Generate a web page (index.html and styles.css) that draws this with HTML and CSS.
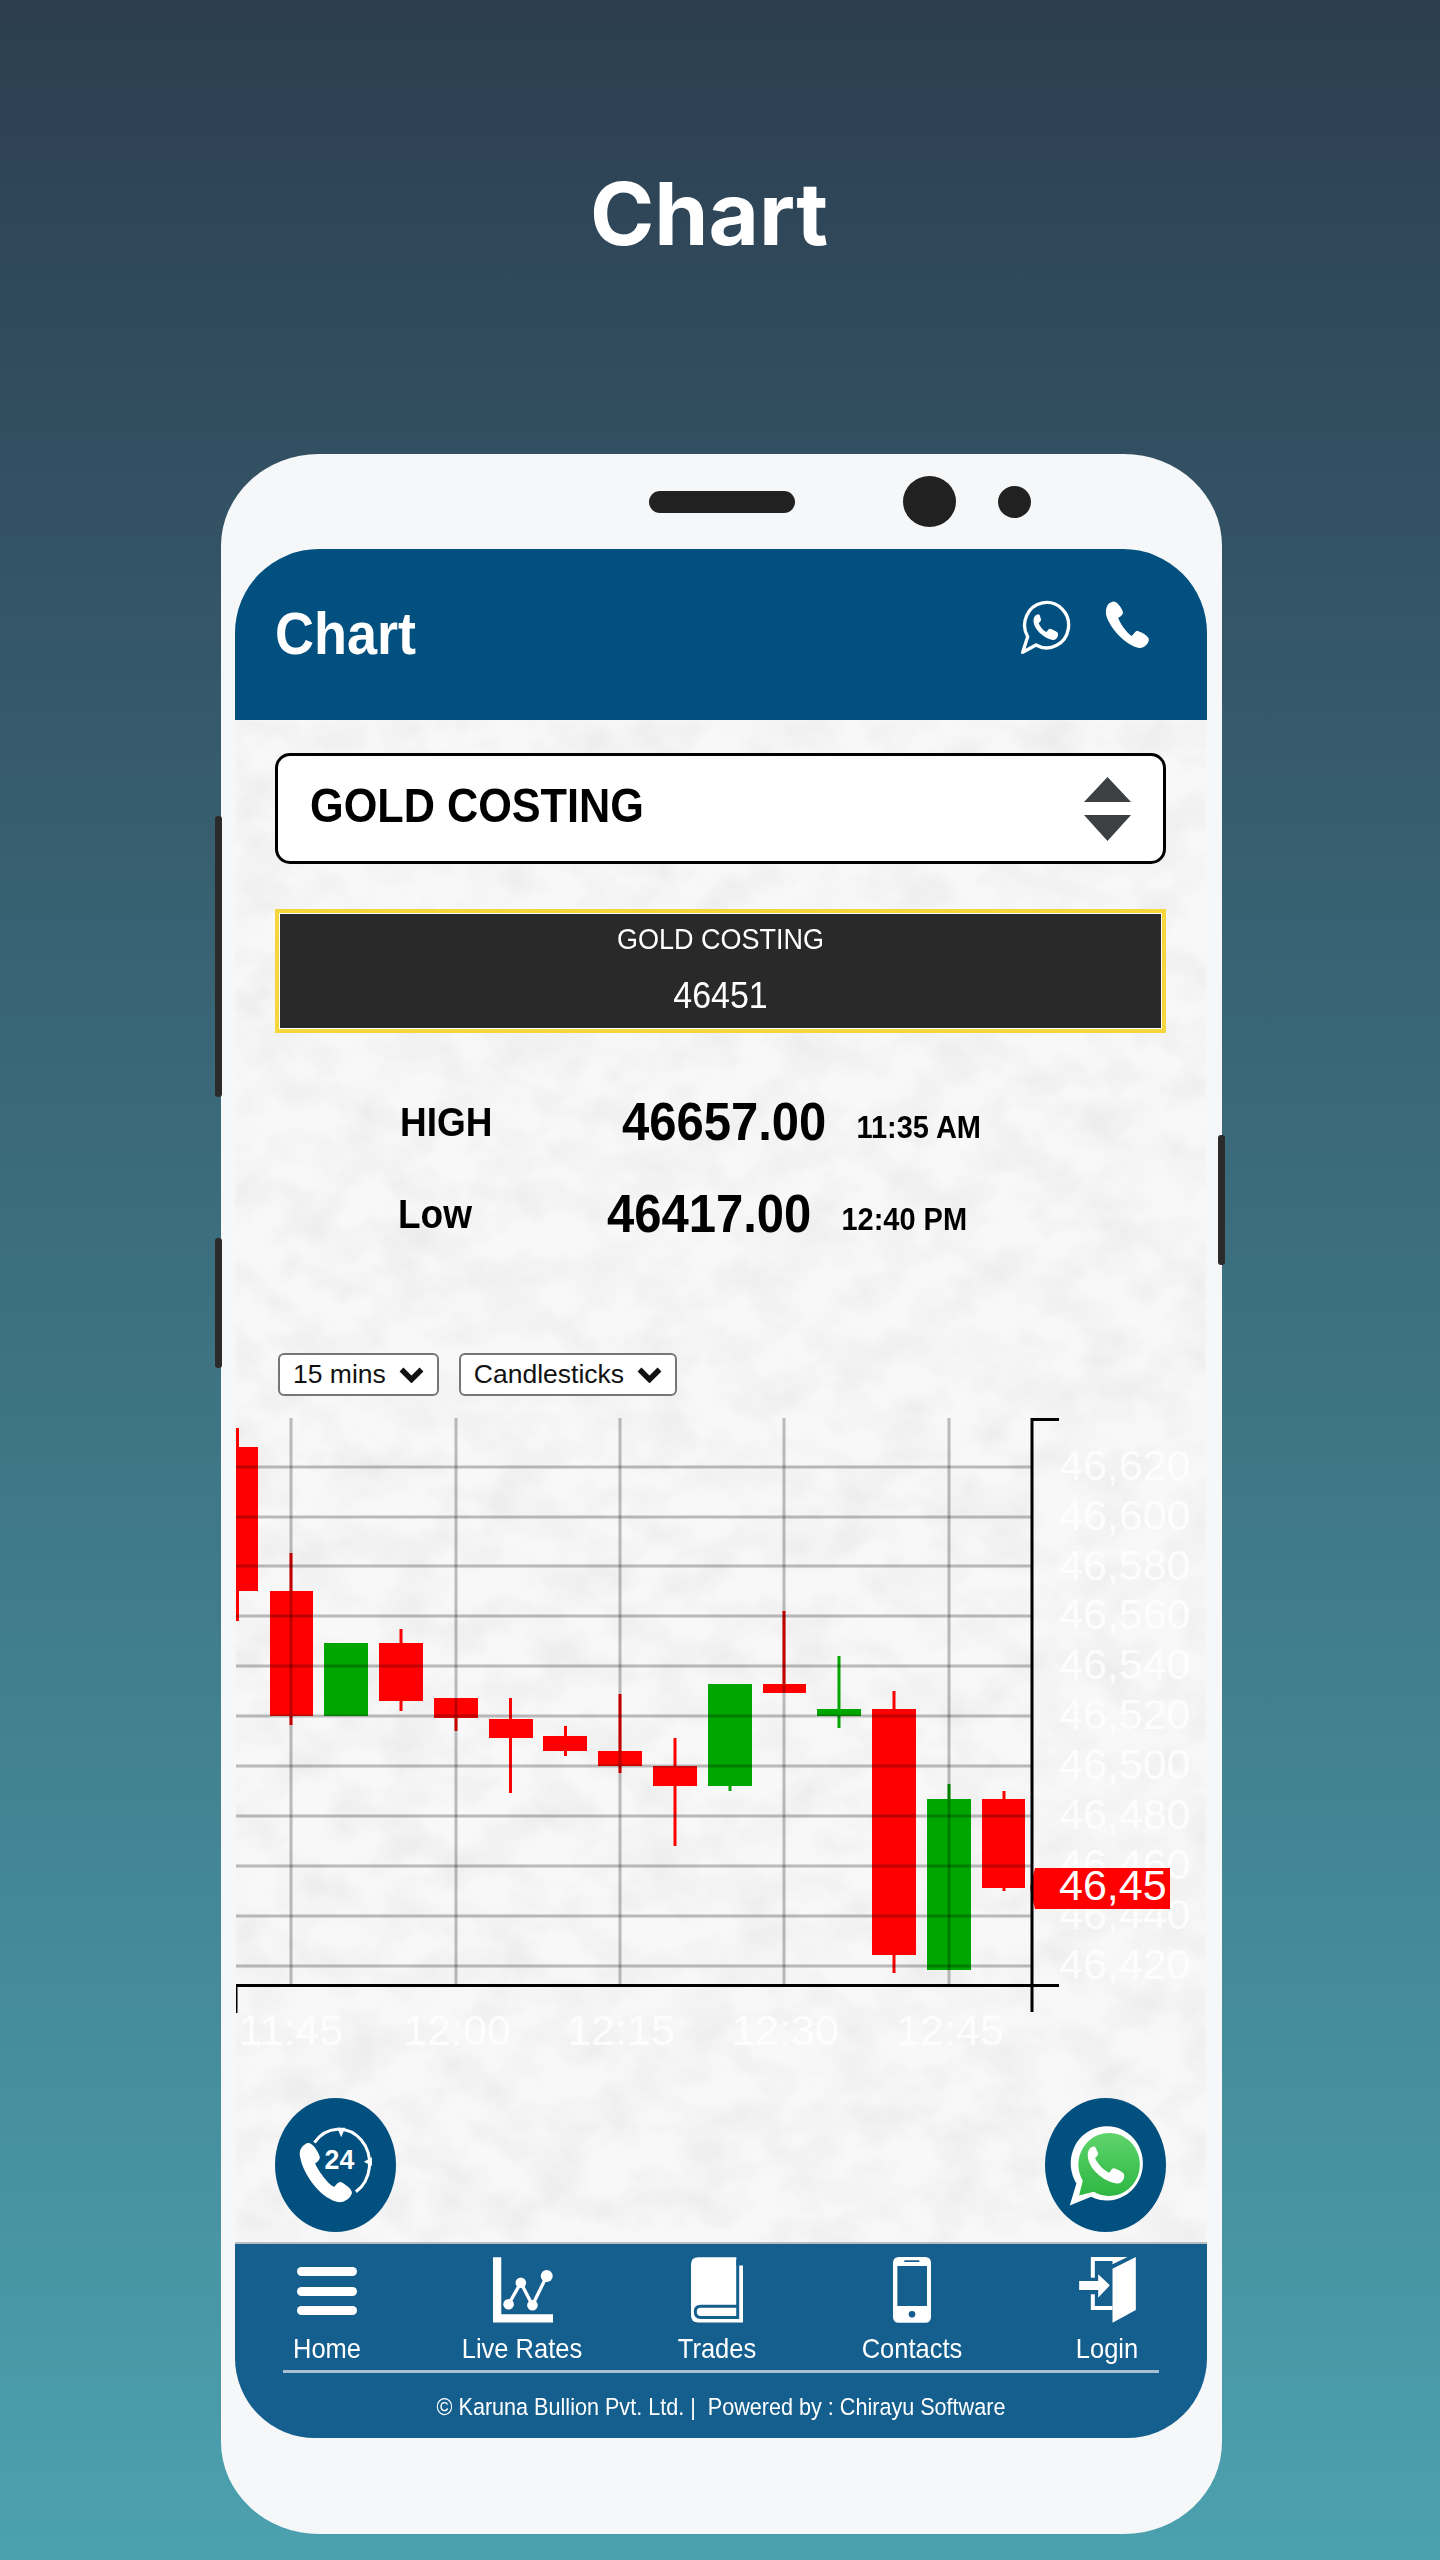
FILE: index.html
```html
<!DOCTYPE html>
<html lang="en">
<head>
<meta charset="utf-8">
<title>Chart</title>
<link rel="stylesheet" href="styles.css">
</head>
<body>
<div class="page">
  <h1 class="page-title">Chart</h1>
  <div class="phone">
    <span class="side-btn side-left-a"></span>
    <span class="side-btn side-left-b"></span>
    <span class="side-btn side-right"></span>
    <div class="notch">
      <span class="speaker"></span>
      <span class="camera"></span>
      <span class="sensor"></span>
    </div>
    <div class="screen">
      <header class="app-header">
        <span class="app-title tall">Chart</span>
        <div class="header-icons">
          <svg class="ic-wa" viewBox="60 55 150 162"><path d="M65 212 L80 165 A66 68 0 1 1 105 190 Z" fill="none" stroke="#fff" stroke-width="10" stroke-linejoin="round"/><path d="M112 98 C98 100 95 115 100 130 C108 152 135 172 155 175 C168 176 174 160 170 153 C164 147 152 142 147 141 C143 140 140 147 136 151 C125 146 118 136 113 125 C116 120 122 118 120 113 C118 107 117 98 112 98 Z" fill="#fff"/></svg>
          <svg class="ic-call" viewBox="310 55 140 150"><path d="M335 60 C320 64 313 78 316 100 C325 135 370 190 415 199 C430 200 445 185 444 172 C440 160 420 150 408 147 C402 150 398 158 392 163 C375 150 358 125 352 108 C360 104 368 98 366 90 C362 78 348 57 335 60 Z" fill="#fff"/></svg>
        </div>
      </header>
      <main class="app-body">
        <svg class="marble" aria-hidden="true" width="971" height="1522">
          <filter id="marble-noise" x="0" y="0" width="100%" height="100%">
            <feTurbulence type="fractalNoise" baseFrequency="0.02 0.026" numOctaves="5" seed="7"/>
            <feColorMatrix type="matrix" values="0 0 0 0 0.55  0 0 0 0 0.55  0 0 0 0 0.55  0.42 0 0 0 -0.15"/>
            <feGaussianBlur stdDeviation="1.5"/>
          </filter>
          <rect width="971" height="1522" fill="#f8f8f8"/>
          <rect width="971" height="1522" filter="url(#marble-noise)"/>
        </svg>
        <div class="select-box">
          <span class="select-text">GOLD COSTING</span>
          <svg class="select-arrows" viewBox="0 0 47 64"><path d="M23.5 0 L47 25 H0 Z M0 38 H47 L23.5 64 Z" fill="#3c4043"/></svg>
        </div>
        <div class="quote-box">
          <span class="quote-name tall">GOLD COSTING</span>
          <span class="quote-price tall">46451</span>
        </div>
        <div class="stats">
          <div class="stat-row stat-high">
            <span class="stat-label tall">HIGH</span>
            <span class="stat-value tall">46657.00</span>
            <span class="stat-time tall">11:35 AM</span>
          </div>
          <div class="stat-row stat-low">
            <span class="stat-label tall">Low</span>
            <span class="stat-value tall">46417.00</span>
            <span class="stat-time tall">12:40 PM</span>
          </div>
        </div>
        <div class="chart-controls">
          <div class="mini-select">15 mins<svg class="chevron" viewBox="0 0 25 16"><path d="M2.5 2.5 L12.5 12.5 L22.5 2.5" fill="none" stroke="#111" stroke-width="5.5"/></svg></div>
          <div class="mini-select">Candlesticks<svg class="chevron" viewBox="0 0 25 16"><path d="M2.5 2.5 L12.5 12.5 L22.5 2.5" fill="none" stroke="#111" stroke-width="5.5"/></svg></div>
        </div>
        <svg class="chart" viewBox="235 1410 971 650" width="971" height="650">
          <defs><clipPath id="plot-clip"><rect x="236" y="1410" width="970" height="650"/></clipPath></defs>
          <g clip-path="url(#plot-clip)">
            <g class="candle-red">
              <rect x="236" y="1428" width="3" height="193"/><rect x="236" y="1447" width="22" height="144"/>
              <rect x="289.5" y="1553" width="3" height="172"/><rect x="270" y="1591" width="43" height="125"/>
              <rect x="399.5" y="1629" width="3" height="82"/><rect x="379" y="1643" width="44" height="58"/>
              <rect x="454.5" y="1698" width="3" height="33"/><rect x="434" y="1698" width="44" height="20"/>
              <rect x="509" y="1698" width="3" height="95"/><rect x="489" y="1719" width="44" height="19"/>
              <rect x="564" y="1726" width="3" height="30"/><rect x="543" y="1736" width="44" height="15"/>
              <rect x="618.5" y="1694" width="3" height="79"/><rect x="598" y="1751" width="44" height="15"/>
              <rect x="673.5" y="1738" width="3" height="108"/><rect x="653" y="1766" width="44" height="20"/>
              <rect x="782.5" y="1611" width="3" height="82"/><rect x="763" y="1684" width="43" height="9"/>
              <rect x="892.5" y="1691" width="3" height="282"/><rect x="872" y="1709" width="44" height="246"/>
              <rect x="1002.5" y="1791" width="3" height="100"/><rect x="982" y="1799" width="43" height="89"/>
            </g>
            <g class="candle-green">
              <rect x="324" y="1643" width="44" height="73"/>
              <rect x="728.5" y="1684" width="3" height="107"/><rect x="708" y="1684" width="44" height="102"/>
              <rect x="837.5" y="1656" width="3" height="72"/><rect x="817" y="1709" width="44" height="7"/>
              <rect x="947.5" y="1784" width="3" height="186"/><rect x="927" y="1799" width="44" height="171"/>
            </g>
            <g class="grid-lines">
              <path d="M236 1467H1032M236 1517H1032M236 1566H1032M236 1616H1032M236 1666H1032M236 1716H1032M236 1766H1032M236 1816H1032M236 1866H1032M236 1916H1032M236 1966H1032"/>
              <path d="M291 1418V1984M456 1418V1984M620 1418V1984M784 1418V1984M949 1418V1984"/>
            </g>
            <g class="axis-labels">
              <text x="1059" y="1480">46,620</text>
              <text x="1059" y="1530">46,600</text>
              <text x="1059" y="1580">46,580</text>
              <text x="1059" y="1629">46,560</text>
              <text x="1059" y="1679">46,540</text>
              <text x="1059" y="1729">46,520</text>
              <text x="1059" y="1779">46,500</text>
              <text x="1059" y="1829">46,480</text>
              <text x="1059" y="1879">46,460</text>
              <text x="1059" y="1929">46,440</text>
              <text x="1059" y="1979">46,420</text>
              <text x="291" y="2045" text-anchor="middle">11:45</text>
              <text x="457" y="2045" text-anchor="middle">12:00</text>
              <text x="621" y="2045" text-anchor="middle">12:15</text>
              <text x="785" y="2045" text-anchor="middle">12:30</text>
              <text x="950" y="2045" text-anchor="middle">12:45</text>
            </g>
            <path class="price-tag" d="M1030 1888 L1035 1868 H1170 V1909 H1035 Z"/>
            <text class="price-tag-text" x="1059" y="1900">46,45</text>
            <path class="axis" d="M1059 1419.5H1032V2012M236 2013V1985.5H1059"/>
          </g>
        </svg>
        <div class="float-buttons">
          <div class="float-btn">
            <svg class="float-icon" viewBox="30 25 362 400" preserveAspectRatio="none">
              <path d="M148 158 A92 102 0 1 1 272 305" fill="none" stroke="#fff" stroke-width="9"/>
              <path d="M216 114 H240 L228 142 Z M320 202 V228 L296 215 Z" fill="#fff"/>
              <path d="M125 160 C108 168 100 185 106 205 C115 250 160 320 215 335 C235 340 255 325 260 310 C262 300 250 290 232 278 C222 272 215 280 208 290 C195 290 160 245 150 220 C160 215 168 205 162 195 C155 178 140 155 125 160 Z" fill="#fff"/>
              <text class="icon-24" x="223" y="238" text-anchor="middle">24</text>
            </svg>
          </div>
          <div class="float-btn">
            <svg class="float-icon" viewBox="30 25 362 400" preserveAspectRatio="none">
              <defs><linearGradient id="wa-green" x1="0" y1="0" x2="0" y2="1"><stop offset="0" stop-color="#5fd46c"/><stop offset="1" stop-color="#2db742"/></linearGradient></defs>
              <path d="M104 346 L124 280 A108 111 0 1 1 168 320 Z" fill="#fff"/>
              <path d="M132 316 L143 272 A92 94 0 1 1 176 305 Z" fill="url(#wa-green)"/>
              <path d="M175 170 C160 172 155 190 160 210 C170 245 210 275 245 280 C262 282 270 262 266 252 C262 245 245 238 238 235 C232 233 228 240 222 248 C205 240 190 225 180 205 C185 198 192 195 188 188 C182 175 182 170 175 170 Z" fill="#fff"/>
            </svg>
          </div>
        </div>
      </main>
      <footer class="app-footer">
        <nav class="nav">
          <div class="nav-item">
            <svg class="nav-icon nav-menu" viewBox="0 0 60 68"><rect y="11" width="60" height="9" rx="4.5"/><rect y="31" width="60" height="9" rx="4.5"/><rect y="50" width="60" height="9" rx="4.5"/></svg>
            <span class="nav-label tall">Home</span>
          </div>
          <div class="nav-item">
            <svg class="nav-icon nav-rates" viewBox="630 30 190 204"><path d="M636 33H661V205H817V230H636Z"/><path d="M683 175L720 110L755 178L798 90" fill="none" stroke="#fff" stroke-width="10"/><circle cx="683" cy="175" r="16"/><circle cx="720" cy="110" r="16"/><circle cx="755" cy="178" r="16"/><circle cx="798" cy="90" r="18"/></svg>
            <span class="nav-label tall">Live Rates</span>
          </div>
          <div class="nav-item">
            <svg class="nav-icon nav-book" viewBox="30 30 163 204"><path d="M55 33H170V58H190V230H55Q33 230 33 208V55Q33 33 55 33Z"/><path class="book-cut" d="M174 40V215H62Q46 215 46 198Q46 181 62 181H174"/></svg>
            <span class="nav-label tall">Trades</span>
          </div>
          <div class="nav-item">
            <svg class="nav-icon nav-phone" viewBox="638 30 120 204"><path fill-rule="evenodd" d="M659 33H737Q755 33 755 51V212Q755 230 737 230H659Q641 230 641 212V51Q641 33 659 33ZM654 60V180H743V60ZM675 43V48H720V43ZM698 195A10 10 0 1 0 698.1 215A10 10 0 1 0 698 195Z"/></svg>
            <span class="nav-label tall">Contacts</span>
          </div>
          <div class="nav-item">
            <svg class="nav-icon nav-login" viewBox="1202 30 176 204"><path d="M1305 68L1375 33V192L1305 230Z"/><path d="M1240 33H1350L1305 55V45H1252V95H1240ZM1240 145H1252V180H1305V192H1240Z"/><path d="M1205 105H1262V85L1297 118L1262 155V132H1205Z"/></svg>
            <span class="nav-label tall">Login</span>
          </div>
        </nav>
        <div class="copyright"><span class="tall">© Karuna Bullion Pvt. Ltd. |&nbsp; Powered by : Chirayu Software</span></div>
      </footer>
    </div>
  </div>
</div>
</body>
</html>
```
FILE: styles.css
```css
* { box-sizing: border-box; }
html, body { margin: 0; padding: 0; }
body { font-family: "Liberation Sans", Arial, sans-serif; }
.page {
  width: 1440px;
  height: 2560px;
  background: linear-gradient(180deg, #2c3e50 0%, #4ca1af 100%);
  display: flex;
  flex-direction: column;
  align-items: center;
  overflow: hidden;
}
.tall { display: inline-block; transform: scaleY(1.1); }

.page-title {
  margin: 0;
  height: 454px;
  padding: 158px 22px 0 0;
  font-family: Inter, "Noto Sans", sans-serif;
  font-weight: 700;
  font-size: 87px;
  line-height: 112px;
  color: #fff;
}

.phone {
  position: relative;
  width: 1001px;
  height: 2080px;
  margin-left: 3px;
  padding: 0 15px 96px 14px;
  background: #f5f7f9;
  border-radius: 98px / 92px;
  display: flex;
  flex-direction: column;
}
.side-btn { position: absolute; width: 7px; background: #2b2b2b; border-radius: 3px; }
.side-left-a { left: -6px; top: 362px; height: 281px; }
.side-left-b { left: -6px; top: 784px; height: 130px; }
.side-right { right: -3px; top: 681px; height: 130px; }

.notch { height: 95px; flex: none; display: flex; align-items: center; padding: 0 0 0 414px; }
.speaker { width: 146px; height: 22px; background: #212121; border-radius: 11px; }
.camera { width: 53px; height: 51px; margin-left: 108px; background: #212121; border-radius: 50%; }
.sensor { width: 33px; height: 32px; margin-left: 42px; background: #212121; border-radius: 50%; }

.screen { flex: 1; display: flex; flex-direction: column; border-radius: 84px 84px 80px 80px; overflow: hidden; }

.app-header {
  height: 171px;
  flex: none;
  background: #02507f;
  display: flex;
  justify-content: space-between;
  padding: 51px 56px 0 40px;
}
.app-title { height: 66px; font-size: 54px; font-weight: 700; line-height: 66px; color: #fff; }
.header-icons { display: flex; gap: 33px; align-items: flex-start; }
.ic-wa { width: 50px; height: 54px; }
.ic-call { width: 47px; height: 50px; }

.app-body {
  position: relative;
  flex: 1;
  display: flex;
  flex-direction: column;
  padding-top: 33px;
  min-height: 0;
}
.marble { position: absolute; left: 0; top: 0; display: block; }
.app-body > *:not(.marble) { position: relative; }

.select-box {
  margin: 0 0 0 40px;
  width: 891px;
  height: 111px;
  background: #fff;
  border: 3px solid #000;
  border-radius: 15px;
  display: flex;
  align-items: center;
  justify-content: space-between;
  padding: 0 32px 0 32px;
}
.select-text {
  display: inline-block;
  padding-bottom: 6px;
  font-size: 46px;
  font-weight: 700;
  color: #000;
  white-space: nowrap;
  transform: scale(.94, 1.03);
  transform-origin: left center;
  margin-right: -25px;
}
.select-arrows { width: 47px; height: 64px; }

.quote-box {
  margin: 45px 0 0 40px;
  width: 891px;
  height: 124px;
  background: #292929;
  border: 4px solid #f5d63d;
  outline: 1px solid #fff;
  outline-offset: -5px;
  display: flex;
  flex-direction: column;
  align-items: center;
  color: #fff;
  padding-top: 9px;
}
.quote-name { font-size: 27px; line-height: 34px; }
.quote-price { font-size: 34px; line-height: 40px; margin-top: 19px; }

.stats { height: 320px; padding-top: 57px; display: flex; flex-direction: column; gap: 32px; }
.stat-row { display: flex; align-items: baseline; height: 60px; color: #000; font-weight: 700; }
.stat-label { font-size: 37px; }
.stat-value { font-size: 49px; transform-origin: top; }
.stat-time { font-size: 29px; margin-left: 30px; transform-origin: top; }
.stat-high { padding-left: 165px; }
.stat-high .stat-label { width: 222px; }
.stat-low { padding-left: 163px; }
.stat-low .stat-label { width: 209px; }

.chart-controls { display: flex; gap: 20px; padding-left: 43px; height: 57px; align-items: flex-start; }
.mini-select {
  height: 43px;
  display: flex;
  align-items: center;
  gap: 13px;
  padding: 0 13px;
  background: #fff;
  border: 2px solid #767676;
  border-radius: 6px;
  font-size: 26.5px;
  color: #111;
}
.chevron { width: 25px; height: 16px; }

.chart { display: block; flex: none; }
.candle-red { fill: #ff0000; }
.candle-green { fill: #00a600; }
.grid-lines path { fill: none; stroke: #000; stroke-opacity: .25; stroke-width: 3; }
.axis-labels text { font-size: 43px; fill: #fff; fill-opacity: .85; }
.price-tag { fill: #ff0000; }
.price-tag-text { font-size: 43px; fill: #fff; }
.axis { fill: none; stroke: #000; stroke-width: 3; }

.float-buttons { display: flex; justify-content: space-between; padding: 38px 41px 0 40px; }
.float-btn { width: 121px; height: 134px; background: #02507f; border-radius: 50%; }
.float-icon { display: block; width: 121px; height: 134px; }
.icon-24 { font-size: 80px; font-weight: 700; fill: #fff; }

.app-footer {
  height: 196px;
  flex: none;
  background: #155f8f;
  border-top: 2px solid #b5bcc2;
  display: flex;
  flex-direction: column;
  align-items: center;
  color: #fff;
}
.nav {
  width: 876px;
  height: 129px;
  padding: 12px 8px 0 0;
  border-bottom: 3px solid #a8bfd1;
  display: flex;
  justify-content: center;
}
.nav-item { flex: 0 0 195px; display: flex; flex-direction: column; align-items: center; }
.nav-icon { display: block; height: 68px; fill: #fff; }
.nav-menu { width: 60px; }
.nav-rates { width: 63px; }
.nav-book { width: 54px; }
.nav-phone { width: 40px; }
.nav-login { width: 59px; }
.book-cut { fill: none; stroke: #155f8f; stroke-width: 9; }
.nav-label { font-size: 25.5px; line-height: 30px; margin-top: 9px; }
.copyright { font-size: 21.6px; line-height: 26px; padding-top: 21px; }
```
